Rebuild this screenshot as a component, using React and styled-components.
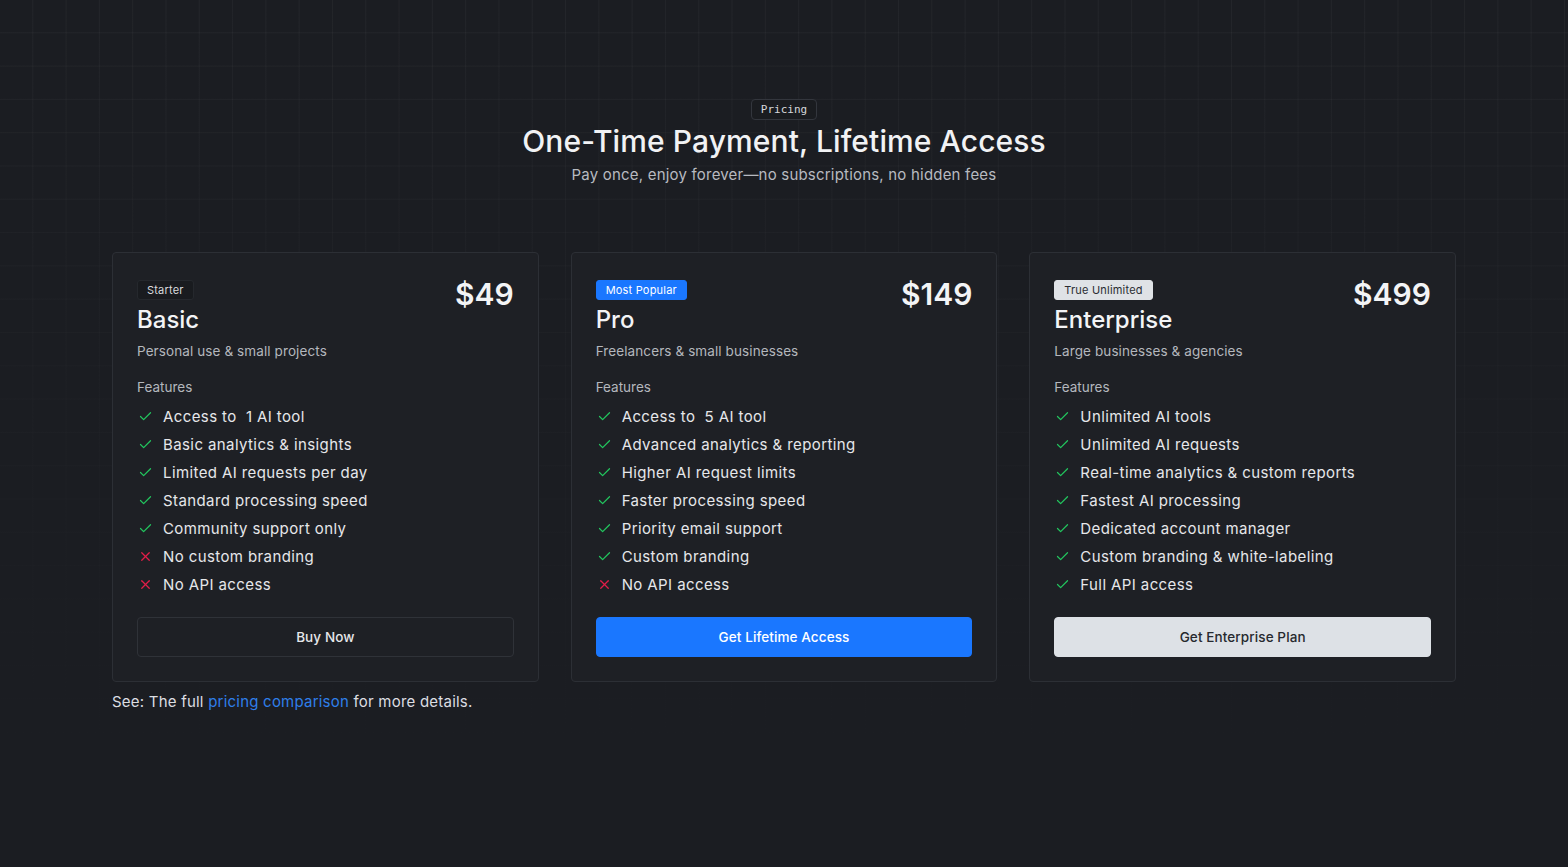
import React from "react";
import styled, { createGlobalStyle } from "styled-components";
import { Check, X } from "lucide-react";

const Global = createGlobalStyle`
  * { box-sizing: border-box; }
  html, body { margin: 0; padding: 0; }
  body {
    background: #1b1d22;
    font-family: Inter, "Noto Sans", sans-serif;
    color: #e8eaed;
  }
`;

const Page = styled.div`
  min-height: 100vh;
  background-color: #1b1d22;
  background-image:
    linear-gradient(to bottom, rgba(27, 29, 34, 0) 0%, rgba(27, 29, 34, 0.6) 40%, #1b1d22 85%),
    linear-gradient(to right, rgba(255, 255, 255, 0.035) 1px, transparent 1px),
    linear-gradient(to bottom, rgba(255, 255, 255, 0.035) 1px, transparent 1px);
  background-size: 100% 100%, 33.3px 33.3px, 33.3px 33.3px;
  background-position: 0 0, -1px 0, 0 -1px;
  padding: 99px 112px 40px;
`;

const Header = styled.header`
  display: flex;
  flex-direction: column;
  align-items: center;
`;

const Eyebrow = styled.span`
  font-family: "DejaVu Sans Mono", "Liberation Mono", monospace;
  font-size: 11px;
  line-height: 19px;
  padding: 0 9px;
  border: 1px solid #33363d;
  border-radius: 4px;
  background: #1a1c20;
  color: #d6d8dc;
`;

const Title = styled.h1`
  margin: 3px 0 0;
  font-size: 30px;
  line-height: 36px;
  font-weight: 500;
  color: #f1f2f4;
  letter-spacing: 0.1px;
`;

const Subtitle = styled.p`
  margin: 4px 0 0;
  font-size: 15px;
  line-height: 24px;
  letter-spacing: 0.2px;
  color: #b7bac0;
`;

const Grid = styled.div`
  margin-top: 65px;
  display: grid;
  grid-template-columns: repeat(3, 1fr);
  gap: 32px;
`;

const Card = styled.div`
  background: #1e2025;
  border: 1px solid #2c2f35;
  border-radius: 4px;
  padding: 27px 24px 24px;
  display: flex;
  flex-direction: column;
`;

const CardTop = styled.div`
  display: flex;
  justify-content: space-between;
  align-items: flex-start;
`;

const NameBlock = styled.div`
  display: flex;
  flex-direction: column;
  align-items: flex-start;
`;

const badgeStyles = {
  outline: "background: #191b1f; color: #d8dadd; border: 1px solid #25282d;",
  primary: "background: #1a77ff; color: #ffffff; border: 1px solid #1a77ff;",
  light: "background: #dfe2e6; color: #2a2d33; border: 1px solid #dfe2e6;",
};

const Badge = styled.span`
  font-size: 11px;
  line-height: 18px;
  padding: 0 9px;
  letter-spacing: 0.2px;
  border-radius: 3px;
  ${(p) => badgeStyles[p.$variant]}
`;

const PlanName = styled.h2`
  margin: 4px 0 0;
  font-size: 24px;
  line-height: 32px;
  font-weight: 500;
  color: #f3f4f6;
`;

const Price = styled.div`
  font-size: 30px;
  line-height: 36px;
  font-weight: 600;
  color: #f3f4f6;
  margin-top: -4px;
`;

const PlanDesc = styled.p`
  margin: 5px 0 0;
  font-size: 13.5px;
  line-height: 20px;
  letter-spacing: 0.1px;
  color: #b4b7bd;
`;

const FeatLabel = styled.div`
  margin-top: 16px;
  font-size: 13.5px;
  line-height: 20px;
  color: #b4b7bd;
`;

const List = styled.ul`
  list-style: none;
  margin: 5px 0 0;
  padding: 0;
`;

const Item = styled.li`
  display: flex;
  align-items: center;
  gap: 10px;
  height: 28px;
  font-size: 15px;
  letter-spacing: 0.4px;
  color: #e6e7ea;
  svg { flex: none; margin-left: 1px; }
`;

const ItemText = styled.span`
  white-space: pre;
`;

const buttonStyles = {
  outline: "background: transparent; color: #e6e7ea; border: 1px solid #2f3238;",
  primary: "background: #1a77ff; color: #ffffff; border: 1px solid #1a77ff;",
  light: "background: #dde1e6; color: #26292e; border: 1px solid #dde1e6;",
};

const Button = styled.button`
  margin-top: 19px;
  height: 40px;
  width: 100%;
  border-radius: 4px;
  font-family: inherit;
  font-size: 13.5px;
  font-weight: 500;
  letter-spacing: 0.1px;
  cursor: pointer;
  ${(p) => buttonStyles[p.$variant]}
`;

const Footer = styled.p`
  margin: 9px 0 0;
  font-size: 15px;
  line-height: 22px;
  letter-spacing: 0.22px;
  color: #dcdee2;
`;

const Link = styled.a`
  color: #2f7fea;
  text-decoration: none;
`;

const plans = [
  {
    badge: "Starter",
    variant: "outline",
    name: "Basic",
    price: "$49",
    desc: "Personal use & small projects",
    button: "Buy Now",
    features: [
      ["Access to  1 AI tool", true],
      ["Basic analytics & insights", true],
      ["Limited AI requests per day", true],
      ["Standard processing speed", true],
      ["Community support only", true],
      ["No custom branding", false],
      ["No API access", false],
    ],
  },
  {
    badge: "Most Popular",
    variant: "primary",
    name: "Pro",
    price: "$149",
    desc: "Freelancers & small businesses",
    button: "Get Lifetime Access",
    features: [
      ["Access to  5 AI tool", true],
      ["Advanced analytics & reporting", true],
      ["Higher AI request limits", true],
      ["Faster processing speed", true],
      ["Priority email support", true],
      ["Custom branding", true],
      ["No API access", false],
    ],
  },
  {
    badge: "True Unlimited",
    variant: "light",
    name: "Enterprise",
    price: "$499",
    desc: "Large businesses & agencies",
    button: "Get Enterprise Plan",
    features: [
      ["Unlimited AI tools", true],
      ["Unlimited AI requests", true],
      ["Real-time analytics & custom reports", true],
      ["Fastest AI processing", true],
      ["Dedicated account manager", true],
      ["Custom branding & white-labeling", true],
      ["Full API access", true],
    ],
  },
];

export default function App() {
  return (
    <Page>
      <Global />
      <Header>
        <Eyebrow>Pricing</Eyebrow>
        <Title>One-Time Payment, Lifetime Access</Title>
        <Subtitle>Pay once, enjoy forever—no subscriptions, no hidden fees</Subtitle>
      </Header>
      <Grid>
        {plans.map((p) => (
          <Card key={p.name}>
            <CardTop>
              <NameBlock>
                <Badge $variant={p.variant}>{p.badge}</Badge>
                <PlanName>{p.name}</PlanName>
              </NameBlock>
              <Price>{p.price}</Price>
            </CardTop>
            <PlanDesc>{p.desc}</PlanDesc>
            <FeatLabel>Features</FeatLabel>
            <List>
              {p.features.map(([text, ok]) => (
                <Item key={text}>
                  {ok ? (
                    <Check size={15} color="#22c55e" strokeWidth={2} />
                  ) : (
                    <X size={15} color="#e11d48" strokeWidth={2} />
                  )}
                  <ItemText>{text}</ItemText>
                </Item>
              ))}
            </List>
            <Button $variant={p.variant}>{p.button}</Button>
          </Card>
        ))}
      </Grid>
      <Footer>
        See: The full <Link href="#">pricing comparison</Link> for more details.
      </Footer>
    </Page>
  );
}
